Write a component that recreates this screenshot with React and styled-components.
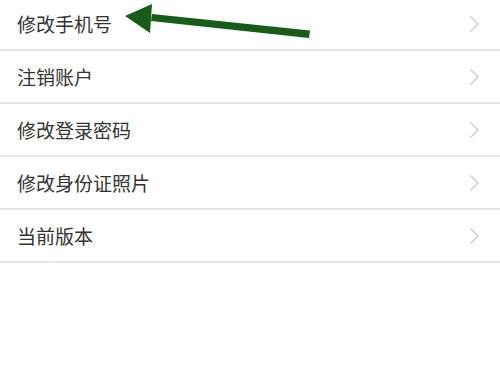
import React from "react";
import styled, { createGlobalStyle } from "styled-components";

const Global = createGlobalStyle`
  html, body { margin: 0; padding: 0; background: #ffffff; }
  body { font-family: "Noto Sans CJK SC", "Noto Sans", sans-serif; }
`;

const Page = styled.div`
  position: relative;
  width: 500px;
  height: 373px;
  overflow: hidden;
  background: #ffffff;
`;

const List = styled.ul`
  list-style: none;
  margin: -2px 0 0 0;
  padding: 0;
`;

const Row = styled.li`
  display: flex;
  align-items: center;
  justify-content: space-between;
  height: 51px;
  padding: 0 20px 0 17px;
  border-bottom: 2px solid #e6e6e6;
`;

const Label = styled.span`
  font-size: 19px;
  color: #333333;
  letter-spacing: 0;
  line-height: 1;
`;

const Chevron = styled.svg`
  width: 11px;
  height: 18px;
  flex: none;
`;

const Arrow = styled.svg`
  position: absolute;
  left: 0;
  top: 0;
  width: 500px;
  height: 60px;
  pointer-events: none;
`;

const items = ["修改手机号", "注销账户", "修改登录密码", "修改身份证照片", "当前版本"];

export default function App() {
  return (
    <Page>
      <Global />
      <List>
        {items.map((t) => (
          <Row key={t}>
            <Label>{t}</Label>
            <Chevron viewBox="0 0 11 18">
              <path d="M1.5 1.5 L9 9 L1.5 16.5" fill="none" stroke="#c8c8c8" strokeWidth="1.3" />
            </Chevron>
          </Row>
        ))}
      </List>
      <Arrow viewBox="0 0 500 60">
        <polygon points="310,30.5 309,38 151,21 152,14" fill="#175c19" />
        <polygon points="125,16 152,4 150,33" fill="#175c19" />
      </Arrow>
    </Page>
  );
}
